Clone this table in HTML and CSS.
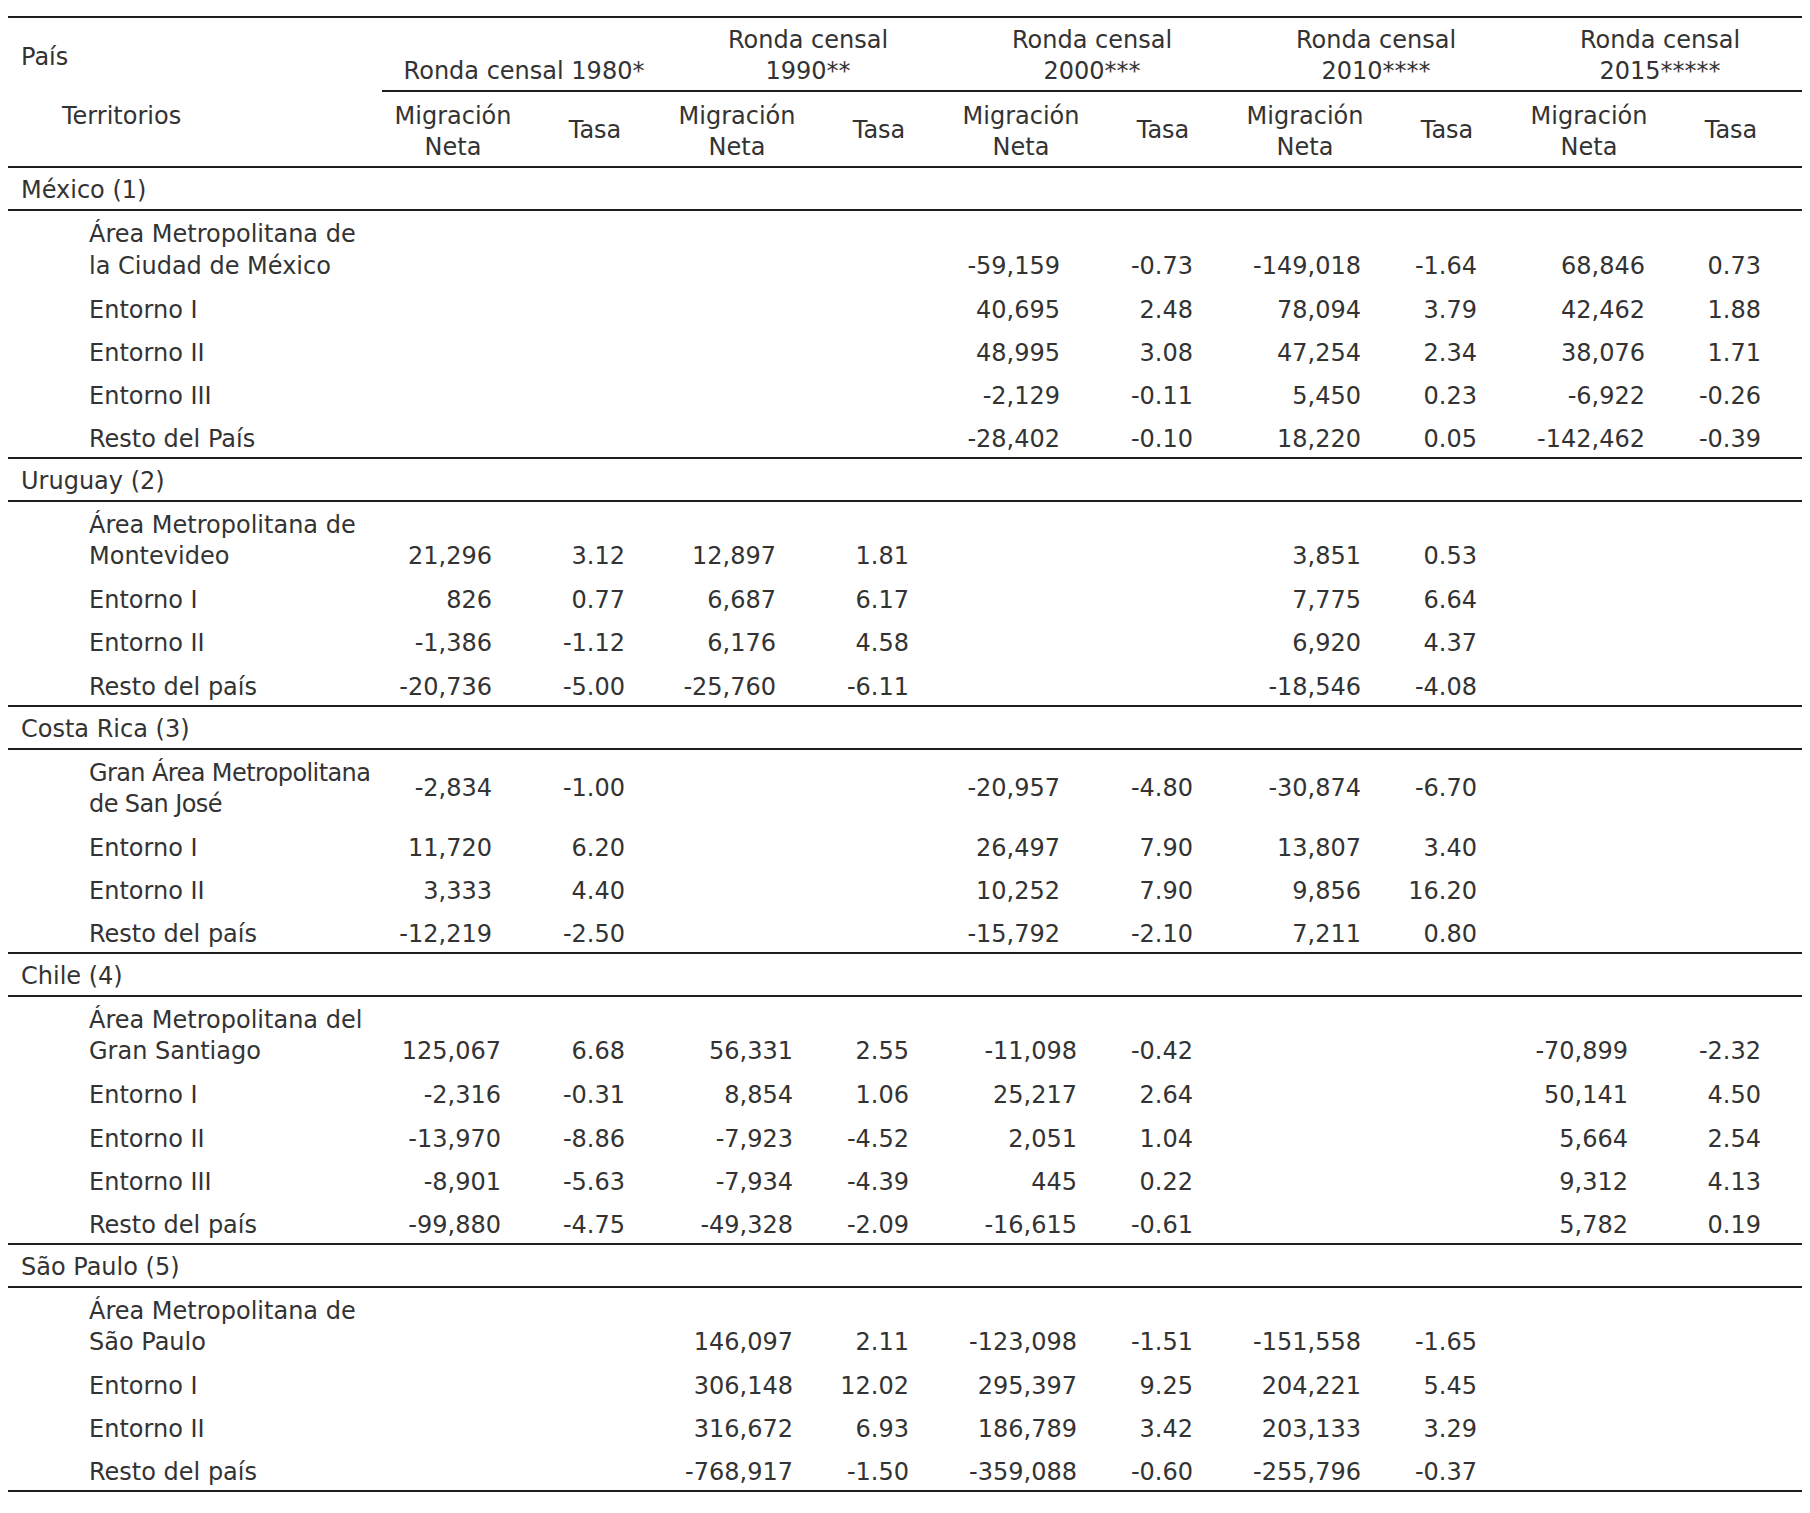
FILE: index.html
```html
<!DOCTYPE html>
<html lang="es">
<head>
<meta charset="utf-8">
<title>Migración neta</title>
<link rel="stylesheet" href="styles.css">
</head>
<body>
<table class="mig">
  <colgroup>
    <col class="c-lbl">
    <col class="c-num"><col class="c-num"><col class="c-num"><col class="c-num"><col class="c-num">
    <col class="c-num"><col class="c-num"><col class="c-num"><col class="c-num"><col class="c-num">
  </colgroup>
  <thead>
    <tr class="h1">
      <th class="pais">País</th>
      <th class="grp" colspan="2">Ronda censal 1980*</th>
      <th class="grp" colspan="2">Ronda censal<br>1990**</th>
      <th class="grp" colspan="2">Ronda censal<br>2000***</th>
      <th class="grp" colspan="2">Ronda censal<br>2010****</th>
      <th class="grp" colspan="2">Ronda censal<br>2015*****</th>
    </tr>
    <tr class="h2">
      <th class="terr">Territorios</th>
      <th class="mnh">Migración<br>Neta</th><th class="tsh">Tasa</th>
      <th class="mnh">Migración<br>Neta</th><th class="tsh">Tasa</th>
      <th class="mnh">Migración<br>Neta</th><th class="tsh">Tasa</th>
      <th class="mnh">Migración<br>Neta</th><th class="tsh">Tasa</th>
      <th class="mnh">Migración<br>Neta</th><th class="tsh">Tasa</th>
    </tr>
  </thead>
  <tbody>
    <!-- México -->
    <tr class="country"><td colspan="11">México (1)</td></tr>
    <tr class="first">
      <td class="lbl">Área Metropolitana de<br>la Ciudad de México</td>
      <td class="mn"></td><td class="ts"></td>
      <td class="mn"></td><td class="ts"></td>
      <td class="mn a">-59,159</td><td class="ts">-0.73</td>
      <td class="mn b">-149,018</td><td class="ts">-1.64</td>
      <td class="mn b">68,846</td><td class="ts">0.73</td>
    </tr>
    <tr>
      <td class="lbl">Entorno I</td>
      <td class="mn"></td><td class="ts"></td>
      <td class="mn"></td><td class="ts"></td>
      <td class="mn a">40,695</td><td class="ts">2.48</td>
      <td class="mn b">78,094</td><td class="ts">3.79</td>
      <td class="mn b">42,462</td><td class="ts">1.88</td>
    </tr>
    <tr>
      <td class="lbl">Entorno II</td>
      <td class="mn"></td><td class="ts"></td>
      <td class="mn"></td><td class="ts"></td>
      <td class="mn a">48,995</td><td class="ts">3.08</td>
      <td class="mn b">47,254</td><td class="ts">2.34</td>
      <td class="mn b">38,076</td><td class="ts">1.71</td>
    </tr>
    <tr>
      <td class="lbl">Entorno III</td>
      <td class="mn"></td><td class="ts"></td>
      <td class="mn"></td><td class="ts"></td>
      <td class="mn a">-2,129</td><td class="ts">-0.11</td>
      <td class="mn b">5,450</td><td class="ts">0.23</td>
      <td class="mn b">-6,922</td><td class="ts">-0.26</td>
    </tr>
    <tr class="last">
      <td class="lbl">Resto del País</td>
      <td class="mn"></td><td class="ts"></td>
      <td class="mn"></td><td class="ts"></td>
      <td class="mn a">-28,402</td><td class="ts">-0.10</td>
      <td class="mn b">18,220</td><td class="ts">0.05</td>
      <td class="mn b">-142,462</td><td class="ts">-0.39</td>
    </tr>

    <!-- Uruguay -->
    <tr class="country"><td colspan="11">Uruguay (2)</td></tr>
    <tr class="first">
      <td class="lbl">Área Metropolitana de<br>Montevideo</td>
      <td class="mn a">21,296</td><td class="ts">3.12</td>
      <td class="mn a">12,897</td><td class="ts">1.81</td>
      <td class="mn"></td><td class="ts"></td>
      <td class="mn b">3,851</td><td class="ts">0.53</td>
      <td class="mn"></td><td class="ts"></td>
    </tr>
    <tr>
      <td class="lbl">Entorno I</td>
      <td class="mn a">826</td><td class="ts">0.77</td>
      <td class="mn a">6,687</td><td class="ts">6.17</td>
      <td class="mn"></td><td class="ts"></td>
      <td class="mn b">7,775</td><td class="ts">6.64</td>
      <td class="mn"></td><td class="ts"></td>
    </tr>
    <tr>
      <td class="lbl">Entorno II</td>
      <td class="mn a">-1,386</td><td class="ts">-1.12</td>
      <td class="mn a">6,176</td><td class="ts">4.58</td>
      <td class="mn"></td><td class="ts"></td>
      <td class="mn b">6,920</td><td class="ts">4.37</td>
      <td class="mn"></td><td class="ts"></td>
    </tr>
    <tr class="last">
      <td class="lbl">Resto del país</td>
      <td class="mn a">-20,736</td><td class="ts">-5.00</td>
      <td class="mn a">-25,760</td><td class="ts">-6.11</td>
      <td class="mn"></td><td class="ts"></td>
      <td class="mn b">-18,546</td><td class="ts">-4.08</td>
      <td class="mn"></td><td class="ts"></td>
    </tr>

    <!-- Costa Rica -->
    <tr class="country"><td colspan="11">Costa Rica (3)</td></tr>
    <tr class="first mid">
      <td class="lbl tight">Gran Área Metropolitana<br>de San José</td>
      <td class="mn a">-2,834</td><td class="ts">-1.00</td>
      <td class="mn"></td><td class="ts"></td>
      <td class="mn a">-20,957</td><td class="ts">-4.80</td>
      <td class="mn b">-30,874</td><td class="ts">-6.70</td>
      <td class="mn"></td><td class="ts"></td>
    </tr>
    <tr>
      <td class="lbl">Entorno I</td>
      <td class="mn a">11,720</td><td class="ts">6.20</td>
      <td class="mn"></td><td class="ts"></td>
      <td class="mn a">26,497</td><td class="ts">7.90</td>
      <td class="mn b">13,807</td><td class="ts">3.40</td>
      <td class="mn"></td><td class="ts"></td>
    </tr>
    <tr>
      <td class="lbl">Entorno II</td>
      <td class="mn a">3,333</td><td class="ts">4.40</td>
      <td class="mn"></td><td class="ts"></td>
      <td class="mn a">10,252</td><td class="ts">7.90</td>
      <td class="mn b">9,856</td><td class="ts">16.20</td>
      <td class="mn"></td><td class="ts"></td>
    </tr>
    <tr class="last">
      <td class="lbl">Resto del país</td>
      <td class="mn a">-12,219</td><td class="ts">-2.50</td>
      <td class="mn"></td><td class="ts"></td>
      <td class="mn a">-15,792</td><td class="ts">-2.10</td>
      <td class="mn b">7,211</td><td class="ts">0.80</td>
      <td class="mn"></td><td class="ts"></td>
    </tr>

    <!-- Chile -->
    <tr class="country"><td colspan="11">Chile (4)</td></tr>
    <tr class="first">
      <td class="lbl">Área Metropolitana del<br>Gran Santiago</td>
      <td class="mn c">125,067</td><td class="ts">6.68</td>
      <td class="mn b">56,331</td><td class="ts">2.55</td>
      <td class="mn b">-11,098</td><td class="ts">-0.42</td>
      <td class="mn"></td><td class="ts"></td>
      <td class="mn a">-70,899</td><td class="ts">-2.32</td>
    </tr>
    <tr>
      <td class="lbl">Entorno I</td>
      <td class="mn c">-2,316</td><td class="ts">-0.31</td>
      <td class="mn b">8,854</td><td class="ts">1.06</td>
      <td class="mn b">25,217</td><td class="ts">2.64</td>
      <td class="mn"></td><td class="ts"></td>
      <td class="mn a">50,141</td><td class="ts">4.50</td>
    </tr>
    <tr>
      <td class="lbl">Entorno II</td>
      <td class="mn c">-13,970</td><td class="ts">-8.86</td>
      <td class="mn b">-7,923</td><td class="ts">-4.52</td>
      <td class="mn b">2,051</td><td class="ts">1.04</td>
      <td class="mn"></td><td class="ts"></td>
      <td class="mn a">5,664</td><td class="ts">2.54</td>
    </tr>
    <tr>
      <td class="lbl">Entorno III</td>
      <td class="mn c">-8,901</td><td class="ts">-5.63</td>
      <td class="mn b">-7,934</td><td class="ts">-4.39</td>
      <td class="mn b">445</td><td class="ts">0.22</td>
      <td class="mn"></td><td class="ts"></td>
      <td class="mn a">9,312</td><td class="ts">4.13</td>
    </tr>
    <tr class="last">
      <td class="lbl">Resto del país</td>
      <td class="mn c">-99,880</td><td class="ts">-4.75</td>
      <td class="mn b">-49,328</td><td class="ts">-2.09</td>
      <td class="mn b">-16,615</td><td class="ts">-0.61</td>
      <td class="mn"></td><td class="ts"></td>
      <td class="mn a">5,782</td><td class="ts">0.19</td>
    </tr>

    <!-- São Paulo -->
    <tr class="country"><td colspan="11">São Paulo (5)</td></tr>
    <tr class="first">
      <td class="lbl">Área Metropolitana de<br>São Paulo</td>
      <td class="mn"></td><td class="ts"></td>
      <td class="mn b">146,097</td><td class="ts">2.11</td>
      <td class="mn b">-123,098</td><td class="ts">-1.51</td>
      <td class="mn b">-151,558</td><td class="ts">-1.65</td>
      <td class="mn"></td><td class="ts"></td>
    </tr>
    <tr>
      <td class="lbl">Entorno I</td>
      <td class="mn"></td><td class="ts"></td>
      <td class="mn b">306,148</td><td class="ts">12.02</td>
      <td class="mn b">295,397</td><td class="ts">9.25</td>
      <td class="mn b">204,221</td><td class="ts">5.45</td>
      <td class="mn"></td><td class="ts"></td>
    </tr>
    <tr>
      <td class="lbl">Entorno II</td>
      <td class="mn"></td><td class="ts"></td>
      <td class="mn b">316,672</td><td class="ts">6.93</td>
      <td class="mn b">186,789</td><td class="ts">3.42</td>
      <td class="mn b">203,133</td><td class="ts">3.29</td>
      <td class="mn"></td><td class="ts"></td>
    </tr>
    <tr class="last">
      <td class="lbl">Resto del país</td>
      <td class="mn"></td><td class="ts"></td>
      <td class="mn b">-768,917</td><td class="ts">-1.50</td>
      <td class="mn b">-359,088</td><td class="ts">-0.60</td>
      <td class="mn b">-255,796</td><td class="ts">-0.37</td>
      <td class="mn"></td><td class="ts"></td>
    </tr>
  </tbody>
</table>
</body>
</html>
```

FILE: styles.css
```css
html, body {
  background: #ffffff;
}

body {
  margin: 8px;
  font-family: "DejaVu Sans", Verdana, sans-serif;
  font-size: 24px;
  line-height: 31.1px;
  color: #333333;
}

.mig {
  width: 1794px;
  margin-top: 8px;
  border-collapse: separate;
  border-spacing: 0;
  table-layout: fixed;
}

.c-lbl { width: 374px; }
.c-num { width: 142px; }

.mig th,
.mig td {
  padding: 0;
  font-weight: normal;
  white-space: nowrap;
}

/* header row 1 */
.h1 th {
  border-top: 2px solid #1e1e1e;
}
.h1 .pais {
  text-align: left;
  vertical-align: middle;
  padding: 4px 0 0 13px;
}
.h1 .grp {
  text-align: center;
  vertical-align: bottom;
  padding: 7px 0 3px;
  border-bottom: 2px solid #1e1e1e;
}

/* header row 2 */
.h2 th {
  border-bottom: 2px solid #1e1e1e;
  padding: 9px 0 3px;
  text-align: center;
}
.h2 .terr {
  text-align: left;
  vertical-align: top;
  padding-left: 54px;
}
.h2 .mnh { vertical-align: top; }
.h2 .tsh { vertical-align: middle; padding: 3px 0 0; }

/* body rows */
.mig tbody td {
  padding-top: 8px;
  padding-bottom: 4px;
  vertical-align: bottom;
}

.mig tbody tr.country td {
  padding: 7px 0 3px 13px;
  border-bottom: 2px solid #1e1e1e;
  text-align: left;
}

.mig tbody tr.first td {
  padding-bottom: 5px;
}
.mig tbody tr.first.mid td {
  vertical-align: middle;
}

.mig tbody tr.last td {
  padding-bottom: 2px;
  border-bottom: 2px solid #1e1e1e;
}

.mig td.lbl {
  padding-left: 81px;
  text-align: left;
}
.mig td.lbl.tight {
  letter-spacing: -0.6px;
}

.mig td.mn {
  text-align: right;
  padding-right: 15px;
}
.mig td.mn.a { padding-right: 32px; }
.mig td.mn.b { padding-right: 15px; }
.mig td.mn.c { padding-right: 23px; }

.mig td.ts {
  text-align: right;
  padding-right: 41px;
}
```
